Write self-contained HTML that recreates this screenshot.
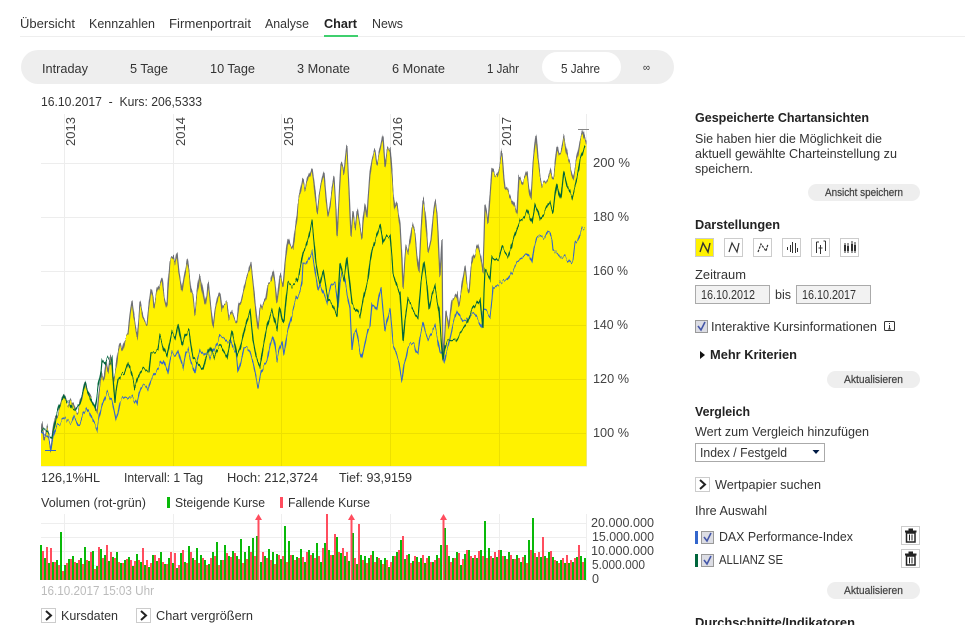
<!DOCTYPE html>
<html lang="de"><head><meta charset="utf-8"><title>Chart</title>
<style>
html,body{margin:0;padding:0;background:#fff;overflow:hidden}
svg{display:block}
text{font-family:"Liberation Sans",sans-serif;font-size:13px;fill:#333}
.b{font-weight:bold;fill:#222}
.btn{font-size:11px;fill:#444;stroke:#444;stroke-width:.25}
.ax{font-size:13px;fill:#444}
.vx{font-size:12.5px;fill:#444}
.box{fill:#fff;stroke:#ccc}
.cb{fill:#dcdde4;stroke:#999}
.ck{fill:none;stroke:#4456a8;stroke-width:1.6}
.ic{fill:none;stroke:#333;stroke-width:1}
.ch{fill:none;stroke:#222;stroke-width:2}
</style></head><body>
<svg width="965" height="625" viewBox="0 0 965 625" xmlns="http://www.w3.org/2000/svg">
<defs>
<clipPath id="plot"><rect x="41" y="100" width="545.500" height="366"/></clipPath>
<filter id="jA" filterUnits="userSpaceOnUse" x="30" y="100" width="570" height="400" color-interpolation-filters="sRGB">
<feTurbulence type="fractalNoise" baseFrequency="0.38 0.008" numOctaves="2" seed="4" result="n"/>
<feColorMatrix in="n" type="matrix" values="0 0 0 0 .5 0 1 0 0 0 0 0 1 0 0 0 0 0 0 1" result="m"/>
<feDisplacementMap in="SourceGraphic" in2="m" scale="16" xChannelSelector="R" yChannelSelector="G"/>
</filter>
<filter id="jB" filterUnits="userSpaceOnUse" x="30" y="100" width="570" height="400" color-interpolation-filters="sRGB">
<feTurbulence type="fractalNoise" baseFrequency="0.42 0.008" numOctaves="2" seed="11" result="n"/>
<feColorMatrix in="n" type="matrix" values="0 0 0 0 .5 0 1 0 0 0 0 0 1 0 0 0 0 0 0 1" result="m"/>
<feDisplacementMap in="SourceGraphic" in2="m" scale="10" xChannelSelector="R" yChannelSelector="G"/>
</filter>
</defs>
<!-- nav -->
<rect x="20" y="36" width="945" height="1" fill="#eee"/>
<rect x="324" y="35" width="34" height="2" fill="#3fcf6e"/>
<text x="20" y="28" textLength="55" lengthAdjust="spacingAndGlyphs">Übersicht</text>
<text x="89" y="28" textLength="66" lengthAdjust="spacingAndGlyphs">Kennzahlen</text>
<text x="169" y="28" textLength="82" lengthAdjust="spacingAndGlyphs">Firmenportrait</text>
<text x="265" y="28" textLength="44" lengthAdjust="spacingAndGlyphs">Analyse</text>
<text x="324" y="28" textLength="33" lengthAdjust="spacingAndGlyphs" class="b">Chart</text>
<text x="372" y="28" textLength="31" lengthAdjust="spacingAndGlyphs">News</text>
<!-- range bar -->
<rect x="21" y="50" width="653" height="34" rx="17" fill="#eee"/>
<rect x="542" y="52" width="79" height="30" rx="15" fill="#fff"/>
<text x="42" y="73" textLength="46" lengthAdjust="spacingAndGlyphs">Intraday</text>
<text x="130" y="73" textLength="38" lengthAdjust="spacingAndGlyphs">5 Tage</text>
<text x="210" y="73" textLength="45" lengthAdjust="spacingAndGlyphs">10 Tage</text>
<text x="297" y="73" textLength="53" lengthAdjust="spacingAndGlyphs">3 Monate</text>
<text x="392" y="73" textLength="53" lengthAdjust="spacingAndGlyphs">6 Monate</text>
<text x="487" y="73" textLength="32" lengthAdjust="spacingAndGlyphs">1 Jahr</text>
<text x="561" y="73" textLength="39" lengthAdjust="spacingAndGlyphs">5 Jahre</text>
<text x="643" y="71" textLength="7" lengthAdjust="spacingAndGlyphs" style="font-size:11px">∞</text>
<text x="41" y="106" textLength="161" lengthAdjust="spacingAndGlyphs" xml:space="preserve">16.10.2017  -  Kurs: 206,5333</text>
<!-- chart -->
<g clip-path="url(#plot)">
<g filter="url(#jA)">
<polygon fill="#fff200" points="41,490 41,430 42,422 44,440 47,430 49,436 51,449 53,432 55,420 58,414 60,408 62,400 64,396 66,402 68,403 70,398 73,402 75,408 78,412 80,404 82,396 85,382 87,390 90,397 93,402 97,410 99,392 102,373 104,380 106,362 108,372 110,358 112,370 113,380 116,368 118,352 120,343 122,350 125,336 128,336 130,318 132,304 134,320 137,338 139,315 140,302 143,318 145,322 147,325 149,305 151,289 153,297 154,307 157,292 160,284 162,278 164,295 167,307 168,285 170,260 173,256 175,262 177,252 179,272 182,290 184,276 187,260 189,272 191,290 193,295 195,312 197,295 200,273 202,286 205,307 207,294 208,283 210,300 213,328 215,312 218,298 220,292 222,310 224,306 227,304 229,318 232,312 235,320 237,323 239,305 241,302 243,293 246,280 249,272 251,263 253,280 255,300 258,328 260,310 263,303 266,296 268,282 271,280 273,270 275,282 277,305 279,285 280,273 283,284 285,262 287,245 288,238 290,246 293,250 295,230 297,215 298,203 300,196 302,186 303,180 305,190 308,178 310,172 312,165 314,180 317,212 319,196 321,186 324,172 326,196 328,215 330,205 332,190 334,178 336,210 337,237 339,200 341,162 343,168 344,175 346,156 347,148 349,190 351,237 353,212 355,226 357,208 359,220 362,238 363,220 365,203 367,218 368,200 370,173 372,160 375,150 377,164 380,150 382,140 383,135 385,167 387,152 388,150 390,148 393,190 395,208 397,202 400,223 402,260 403,287 405,258 406,247 408,252 410,240 412,223 415,232 417,256 419,273 421,230 423,200 425,212 428,253 431,240 433,218 435,203 437,216 438,232 440,277 442,240 443,363 445,330 446,310 448,320 449,328 452,302 455,298 457,293 459,308 461,296 463,280 465,267 467,284 469,290 471,268 473,257 476,250 478,245 481,258 483,270 484,240 485,203 487,214 488,222 490,195 492,167 495,175 497,176 500,166 502,153 504,180 505,188 508,192 510,198 514,208 517,217 518,195 519,175 522,182 525,176 527,170 529,188 531,200 533,165 536,135 538,160 540,176 542,183 545,180 548,176 550,170 552,178 554,175 557,147 559,156 561,154 564,138 566,150 568,160 570,165 573,177 575,166 578,153 580,140 583,130 584,136 587,145 587,490"/>
<polyline fill="none" stroke="#6e7075" stroke-width="1.2" points="41,430 42,422 44,440 47,430 49,436 51,449 53,432 55,420 58,414 60,408 62,400 64,396 66,402 68,403 70,398 73,402 75,408 78,412 80,404 82,396 85,382 87,390 90,397 93,402 97,410 99,392 102,373 104,380 106,362 108,372 110,358 112,370 113,380 116,368 118,352 120,343 122,350 125,336 128,336 130,318 132,304 134,320 137,338 139,315 140,302 143,318 145,322 147,325 149,305 151,289 153,297 154,307 157,292 160,284 162,278 164,295 167,307 168,285 170,260 173,256 175,262 177,252 179,272 182,290 184,276 187,260 189,272 191,290 193,295 195,312 197,295 200,273 202,286 205,307 207,294 208,283 210,300 213,328 215,312 218,298 220,292 222,310 224,306 227,304 229,318 232,312 235,320 237,323 239,305 241,302 243,293 246,280 249,272 251,263 253,280 255,300 258,328 260,310 263,303 266,296 268,282 271,280 273,270 275,282 277,305 279,285 280,273 283,284 285,262 287,245 288,238 290,246 293,250 295,230 297,215 298,203 300,196 302,186 303,180 305,190 308,178 310,172 312,165 314,180 317,212 319,196 321,186 324,172 326,196 328,215 330,205 332,190 334,178 336,210 337,237 339,200 341,162 343,168 344,175 346,156 347,148 349,190 351,237 353,212 355,226 357,208 359,220 362,238 363,220 365,203 367,218 368,200 370,173 372,160 375,150 377,164 380,150 382,140 383,135 385,167 387,152 388,150 390,148 393,190 395,208 397,202 400,223 402,260 403,287 405,258 406,247 408,252 410,240 412,223 415,232 417,256 419,273 421,230 423,200 425,212 428,253 431,240 433,218 435,203 437,216 438,232 440,277 442,240 443,363 445,330 446,310 448,320 449,328 452,302 455,298 457,293 459,308 461,296 463,280 465,267 467,284 469,290 471,268 473,257 476,250 478,245 481,258 483,270 484,240 485,203 487,214 488,222 490,195 492,167 495,175 497,176 500,166 502,153 504,180 505,188 508,192 510,198 514,208 517,217 518,195 519,175 522,182 525,176 527,170 529,188 531,200 533,165 536,135 538,160 540,176 542,183 545,180 548,176 550,170 552,178 554,175 557,147 559,156 561,154 564,138 566,150 568,160 570,165 573,177 575,166 578,153 580,140 583,130 584,136 587,145"/>
</g>
</g>
<g stroke="#000" stroke-opacity=".07" stroke-width="1">
<path d="M41 163.500H586M41 217.500H586M41 271.500H586M41 325.500H586M41 379.500H586M41 433.500H586M64.500 114V466M173.500 114V466M281.500 114V466M390.500 114V466M499.500 114V466M586.500 114V467M41 466.500H587"/>
</g>
<path d="M578 129.500H589" stroke="#888" fill="none"/>
<g clip-path="url(#plot)"><g filter="url(#jB)">
<polyline fill="none" stroke="#3366cc" stroke-width="1.1" points="41,433 44,436 47,437 49,440 51,449 53,438 55,430 57,425 60,424 63,420 65,418 68,421 72,422 74,416 76,420 78,425 80,423 83,414 87,408 90,414 93,422 97,430 99,418 102,405 105,397 107,392 110,397 112,400 114,410 116,420 118,414 120,402 125,397 128,398 132,396 137,405 139,394 141,388 143,385 146,386 148,390 151,380 155,373 159,367 163,360 166,368 168,373 170,360 172,353 175,356 178,350 181,362 183,368 186,352 188,350 191,362 195,373 197,360 200,350 204,356 208,352 210,358 214,350 218,342 220,337 224,338 227,342 230,340 233,348 236,352 238,373 241,362 244,348 247,347 250,352 253,362 255,372 258,388 261,372 264,366 267,362 270,345 273,335 275,345 277,360 279,350 282,340 284,355 287,335 290,322 293,310 296,300 300,292 302,283 303,263 306,264 309,258 312,252 314,264 317,283 318,290 320,283 323,292 327,303 331,286 335,283 337,298 338,307 340,282 342,273 345,280 347,292 350,307 352,350 354,332 356,330 358,340 360,352 362,358 365,344 368,330 370,327 372,302 374,304 377,310 379,296 381,287 383,310 385,332 387,322 390,310 392,330 393,343 396,352 399,362 402,382 404,365 406,358 408,347 411,344 414,342 416,350 418,353 420,336 423,323 425,332 428,340 431,334 435,327 437,336 440,353 442,350 444,363 446,352 448,346 450,337 453,322 457,310 460,316 463,322 467,320 471,316 475,313 479,320 482,327 483,310 486,312 490,317 492,300 493,287 497,284 502,282 507,280 510,274 513,270 517,263 522,258 527,253 530,258 532,263 534,248 537,237 541,236 545,238 548,232 550,233 552,240 553,250 556,252 560,257 564,256 568,260 570,263 573,260 575,243 578,240 582,228 585,228"/>
<polyline fill="none" stroke="#00663c" stroke-width="1.2" points="41,433 44,430 47,432 50,436 52,438 54,428 57,413 59,406 60,403 62,402 64,396 67,402 70,403 72,408 75,410 78,405 80,403 83,392 85,382 88,392 92,403 95,410 97,396 98,387 101,372 102,360 105,364 107,358 110,362 112,358 113,378 115,403 116,392 118,380 121,376 124,374 128,363 130,368 133,378 135,388 138,378 140,373 143,368 146,370 149,372 151,352 155,352 158,350 160,337 164,350 167,357 170,342 172,333 175,338 178,323 180,336 182,347 185,336 189,330 191,345 193,357 197,362 203,370 206,358 210,348 214,358 217,350 221,346 224,352 227,358 230,342 232,332 235,345 237,357 240,350 243,337 247,320 250,310 252,330 253,340 256,356 260,367 263,348 267,327 270,315 272,310 275,322 277,330 279,312 280,307 282,318 284,323 286,300 288,283 292,286 296,283 299,275 303,253 306,246 309,236 312,222 314,242 316,263 318,275 320,283 323,270 326,288 328,300 332,305 337,317 339,280 340,263 343,276 344,280 346,265 347,257 350,285 352,303 356,310 360,317 364,296 368,280 370,262 372,250 376,238 380,225 382,236 383,243 387,236 390,235 392,258 393,273 397,285 400,293 402,325 403,343 405,320 408,300 412,306 415,312 418,317 421,282 424,262 427,285 429,310 432,295 435,287 437,300 439,310 441,338 443,360 445,345 447,340 452,338 456,340 460,333 464,328 467,323 472,310 477,302 480,297 482,318 483,327 484,292 485,270 488,276 490,280 491,266 492,257 496,260 499,258 502,247 505,252 508,257 511,248 513,240 517,228 520,220 524,216 527,210 530,218 532,223 534,212 535,205 538,212 540,220 544,214 548,206 550,203 552,210 553,213 555,195 557,182 559,192 561,200 563,180 564,172 567,186 569,190 572,197 575,186 577,178 579,168 580,160 583,152 585,146"/>
</g></g>
<path d="M45 450.500H56" stroke="#3366cc" fill="none"/>
<text x="593" y="167" textLength="37" lengthAdjust="spacingAndGlyphs" class="ax">200 %</text>
<text x="593" y="221" textLength="36" lengthAdjust="spacingAndGlyphs" class="ax">180 %</text>
<text x="593" y="275" textLength="35" lengthAdjust="spacingAndGlyphs" class="ax">160 %</text>
<text x="593" y="329" textLength="35" lengthAdjust="spacingAndGlyphs" class="ax">140 %</text>
<text x="593" y="383" textLength="36" lengthAdjust="spacingAndGlyphs" class="ax">120 %</text>
<text x="593" y="437" textLength="36" lengthAdjust="spacingAndGlyphs" class="ax">100 %</text>
<text transform="translate(75,146) rotate(-90)" class="ax">2013</text>
<text transform="translate(185,146) rotate(-90)" class="ax">2014</text>
<text transform="translate(293,146) rotate(-90)" class="ax">2015</text>
<text transform="translate(402,146) rotate(-90)" class="ax">2016</text>
<text transform="translate(511,146) rotate(-90)" class="ax">2017</text>
<text x="41" y="482" textLength="59" lengthAdjust="spacingAndGlyphs">126,1%HL</text>
<text x="124" y="482" textLength="79" lengthAdjust="spacingAndGlyphs">Intervall: 1 Tag</text>
<text x="227" y="482" textLength="91" lengthAdjust="spacingAndGlyphs">Hoch: 212,3724</text>
<text x="339" y="482" textLength="73" lengthAdjust="spacingAndGlyphs">Tief: 93,9159</text>
<text x="41" y="507" textLength="105" lengthAdjust="spacingAndGlyphs">Volumen (rot-grün)</text>
<rect x="167" y="497" width="3" height="11" fill="#09b909"/>
<text x="175" y="507" textLength="90" lengthAdjust="spacingAndGlyphs">Steigende Kurse</text>
<rect x="280" y="497" width="3" height="11" fill="#ff4d5e"/>
<text x="288" y="507" textLength="82" lengthAdjust="spacingAndGlyphs">Fallende Kurse</text>
<!-- volume -->
<path d="M41 523.500H586M41 537.500H586M41 551.500H586M41 565.500H586M64.500 514V580M173.500 514V580M281.500 514V580M390.500 514V580M499.500 514V580M586.500 514V581" stroke="#eee" fill="none"/>
<path fill="none" stroke="#09b909" stroke-width="2" d="M41 545V580M45 558V580M49 563V580M53 562V580M57 560V580M61 532V580M65 565V580M69 559V580M73 556V580M77 563V580M81 558V580M85 547V580M89 561V580M93 551V580M97 566V580M101 549V580M105 555V580M109 561V580M113 557V580M117 552V580M121 563V580M125 560V580M129 557V580M133 566V580M137 554V580M141 562V580M145 565V580M149 567V580M153 555V580M157 561V580M161 552V580M165 564V580M169 558V580M173 563V580M177 568V580M181 553V580M185 562V580M189 546V580M193 558V580M197 548V580M201 555V580M205 560V580M209 564V580M213 552V580M217 542V580M221 560V580M225 545V580M229 556V580M233 551V580M237 556V580M241 539V580M245 552V580M249 546V580M253 538V580M257 536V580M261 562V580M265 556V580M269 549V580M273 552V580M277 554V580M281 559V580M285 526V580M289 541V580M293 555V580M297 557V580M301 549V580M305 562V580M309 550V580M313 553V580M317 543V580M321 562V580M325 543V580M329 550V580M333 555V580M337 537V580M341 553V580M345 556V580M349 561V580M353 533V580M357 564V580M361 555V580M365 556V580M369 558V580M373 551V580M377 557V580M381 560V580M385 558V580M389 567V580M393 556V580M397 552V580M401 540V580M405 559V580M409 554V580M413 561V580M417 557V580M421 558V580M425 563V580M429 556V580M433 562V580M437 555V580M441 545V580M445 528V580M449 556V580M453 558V580M457 552V580M461 565V580M465 554V580M469 550V580M473 558V580M477 558V580M481 550V580M485 521V580M489 548V580M493 558V580M497 557V580M501 550V580M505 556V580M509 552V580M513 559V580M517 555V580M521 562V580M525 555V580M529 540V580M533 518V580M537 557V580M541 557V580M545 556V580M549 552V580M553 557V580M557 561V580M561 560V580M565 563V580M569 563V580M573 562V580M577 557V580M581 556V580M585 558V580"/>
<path fill="none" stroke="#ff4d5e" stroke-width="2" d="M43 551V580M47 547V580M51 548V580M55 562V580M59 565V580M63 571V580M67 563V580M71 559V580M75 562V580M79 560V580M83 564V580M87 560V580M91 552V580M95 569V580M99 547V580M103 558V580M107 545V580M111 552V580M115 558V580M119 562V580M123 563V580M127 559V580M131 560V580M135 561V580M139 560V580M143 548V580M147 560V580M151 563V580M155 555V580M159 558V580M163 562V580M167 564V580M171 552V580M175 553V580M179 565V580M183 550V580M187 563V580M191 552V580M195 560V580M199 563V580M203 558V580M207 565V580M211 558V580M215 556V580M219 565V580M223 560V580M227 553V580M231 557V580M235 553V580M239 559V580M243 563V580M247 559V580M251 552V580M255 556V580M263 552V580M267 558V580M271 560V580M275 564V580M279 555V580M283 556V580M287 562V580M291 555V580M295 560V580M299 558V580M303 557V580M307 552V580M311 555V580M315 558V580M319 556V580M323 548V580M327 514V580M331 555V580M335 534V580M339 552V580M343 548V580M347 552V580M355 558V580M359 524V580M363 560V580M367 563V580M371 555V580M375 562V580M379 558V580M383 564V580M387 560V580M391 562V580M395 556V580M399 550V580M403 536V580M407 555V580M411 563V580M415 556V580M419 562V580M423 555V580M427 558V580M431 562V580M435 560V580M439 558V580M447 545V580M451 562V580M455 558V580M459 553V580M463 559V580M467 550V580M471 556V580M475 555V580M479 551V580M483 556V580M487 558V580M491 556V580M495 552V580M499 550V580M503 556V580M507 559V580M511 555V580M515 559V580M519 558V580M523 557V580M527 563V580M531 550V580M535 553V580M539 552V580M543 537V580M547 558V580M551 551V580M555 560V580M559 563V580M563 558V580M567 555V580M571 560V580M575 558V580M579 545V580M583 562V580"/>
<path fill="#ff4d5e" d="M258.500 514l3.500 6h-2.500V580h-2V520h-2.500zM351.500 514l3.500 6h-2.500V580h-2V520h-2.500zM443.500 514l3.500 6h-2.500V580h-2V520h-2.500z"/>
<text x="591" y="527" textLength="63" lengthAdjust="spacingAndGlyphs" class="vx">20.000.000</text>
<text x="592" y="541" textLength="62" lengthAdjust="spacingAndGlyphs" class="vx">15.000.000</text>
<text x="591" y="555" textLength="63" lengthAdjust="spacingAndGlyphs" class="vx">10.000.000</text>
<text x="592" y="569" textLength="53" lengthAdjust="spacingAndGlyphs" class="vx">5.000.000</text>
<text x="592" y="583" textLength="7" lengthAdjust="spacingAndGlyphs" class="vx">0</text>
<text x="41" y="595" textLength="113" lengthAdjust="spacingAndGlyphs" style="fill:#bbb">16.10.2017 15:03 Uhr</text>
<rect class="box" x="41.500" y="608.500" width="14" height="14"/><path class="ch" d="M46 611l5 4.500-5 4.500"/>
<text x="61" y="620" textLength="57" lengthAdjust="spacingAndGlyphs">Kursdaten</text>
<rect class="box" x="136.500" y="608.500" width="14" height="14"/><path class="ch" d="M141 611l5 4.500-5 4.500"/>
<text x="156" y="620" textLength="97" lengthAdjust="spacingAndGlyphs">Chart vergrößern</text>
<!-- right column -->
<text x="695" y="122" textLength="174" lengthAdjust="spacingAndGlyphs" class="b">Gespeicherte Chartansichten</text>
<text x="695" y="143" textLength="187" lengthAdjust="spacingAndGlyphs">Sie haben hier die Möglichkeit die</text>
<text x="695" y="158" textLength="202" lengthAdjust="spacingAndGlyphs">aktuell gewählte Charteinstellung zu</text>
<text x="695" y="173" textLength="58" lengthAdjust="spacingAndGlyphs">speichern.</text>
<rect x="808" y="184" width="112" height="17" rx="8.500" fill="#eee"/>
<text x="825" y="196" textLength="78" lengthAdjust="spacingAndGlyphs" class="btn">Ansicht speichern</text>
<text x="695" y="229" textLength="85" lengthAdjust="spacingAndGlyphs" class="b">Darstellungen</text>
<rect x="695.500" y="238.500" width="18" height="18" fill="#fff200" stroke="#ccc"/>
<path class="ic" d="M700 252l3-9 5 9 2-9" style="stroke-width:1.4"/>
<rect class="box" x="724.500" y="238.500" width="18" height="18"/><path class="ic" d="M729 252l3-9 5 9 2-9" style="stroke-width:1.2"/>
<rect class="box" x="753.500" y="238.500" width="18" height="18"/><path class="ic" stroke-dasharray="2.500 1" d="M758 252l3-8 5 7 2-7" style="stroke-width:1.2"/>
<rect class="box" x="782.500" y="238.500" width="18" height="18"/><path class="ic" d="M787.500 247v3M790.500 245v7M792.500 242v11M795.500 243v10M797.500 248v4"/>
<rect class="box" x="811.500" y="238.500" width="18" height="18"/><path class="ic" d="M816.500 242v11M816.500 242h2.500M820.500 245v9M818.500 248h4M825.500 241v10M825.500 241h-2"/>
<rect class="box" x="840.500" y="238.500" width="18" height="18"/><path fill="#333" d="M844 245h2v6h-2zM847 246h2v5h-2zM851 244h2v7h-2zM854 245h2v6h-2z"/><path class="ic" d="M845 243v10M848 243v10M852 241v12M855 242v11"/>
<text x="695" y="279" textLength="51" lengthAdjust="spacingAndGlyphs">Zeitraum</text>
<rect x="695.500" y="285.500" width="74" height="18" fill="#f2f2f2" stroke="#aaa"/>
<text x="701" y="299" textLength="54" lengthAdjust="spacingAndGlyphs">16.10.2012</text>
<text x="775" y="299" textLength="16" lengthAdjust="spacingAndGlyphs">bis</text>
<rect x="796.500" y="285.500" width="74" height="18" fill="#f2f2f2" stroke="#aaa"/>
<text x="802" y="299" textLength="54" lengthAdjust="spacingAndGlyphs">16.10.2017</text>
<rect class="cb" x="695.500" y="320.500" width="12" height="12"/><path class="ck" d="M698 326l3 4 4-8"/>
<text x="711" y="331" textLength="166" lengthAdjust="spacingAndGlyphs">Interaktive Kursinformationen</text>
<rect x="884.500" y="321.500" width="10" height="9" rx="1" fill="none" stroke="#333"/><path d="M889.500 323v1M889.500 325v4M888 329h3" stroke="#333" fill="none"/>
<path d="M700 351l5 4-5 4z" fill="#111"/>
<text x="710" y="359" textLength="87" lengthAdjust="spacingAndGlyphs" class="b">Mehr Kriterien</text>
<rect x="827" y="371" width="93" height="17" rx="8.500" fill="#eee"/>
<text x="844" y="383" textLength="59" lengthAdjust="spacingAndGlyphs" class="btn">Aktualisieren</text>
<text x="695" y="416" textLength="55" lengthAdjust="spacingAndGlyphs" class="b">Vergleich</text>
<text x="695" y="436" textLength="174" lengthAdjust="spacingAndGlyphs">Wert zum Vergleich hinzufügen</text>
<rect x="695.500" y="443.500" width="129" height="18" fill="#fff" stroke="#aaa"/>
<text x="700" y="457" textLength="87" lengthAdjust="spacingAndGlyphs">Index / Festgeld</text>
<path d="M812.500 450h7l-3.500 4z" fill="#001a44"/>
<rect class="box" x="695.500" y="477.500" width="14" height="14"/><path class="ch" d="M700 480l5 4.500-5 4.500"/>
<text x="715" y="489" textLength="106" lengthAdjust="spacingAndGlyphs">Wertpapier suchen</text>
<text x="695" y="515" textLength="72" lengthAdjust="spacingAndGlyphs">Ihre Auswahl</text>
<rect x="695" y="531" width="3" height="13" fill="#3366cc"/>
<rect class="cb" x="701.500" y="531.500" width="12" height="12"/><path class="ck" d="M704 537l3 4 4-8"/>
<text x="719" y="541" textLength="134" lengthAdjust="spacingAndGlyphs">DAX Performance-Index</text>
<rect class="box" x="901.500" y="526.500" width="18" height="18"/>
<path d="M905 530.500h11.500v2H905zM908.500 528.500h4.500v2h-4.500z" fill="#222"/><rect x="906.500" y="533" width="8.500" height="9" fill="#fff" stroke="#222" stroke-width="1.500"/><path d="M909.500 534.500v6M912 534.500v6" stroke="#222" fill="none"/>
<rect x="695" y="554" width="3" height="13" fill="#00663c"/>
<rect class="cb" x="701.500" y="554.500" width="12" height="12"/><path class="ck" d="M704 560l3 4 4-8"/>
<text x="719" y="564" textLength="64" lengthAdjust="spacingAndGlyphs">ALLIANZ SE</text>
<rect class="box" x="901.500" y="549.500" width="18" height="18"/>
<path d="M905 553.500h11.500v2H905zM908.500 551.500h4.500v2h-4.500z" fill="#222"/><rect x="906.500" y="556" width="8.500" height="9" fill="#fff" stroke="#222" stroke-width="1.500"/><path d="M909.500 557.500v6M912 557.500v6" stroke="#222" fill="none"/>
<rect x="827" y="582" width="93" height="17" rx="8.500" fill="#eee"/>
<text x="844" y="594" textLength="59" lengthAdjust="spacingAndGlyphs" class="btn">Aktualisieren</text>
<text x="695" y="627" textLength="160" lengthAdjust="spacingAndGlyphs" class="b">Durchschnitte/Indikatoren</text>
</svg>
</body></html>
